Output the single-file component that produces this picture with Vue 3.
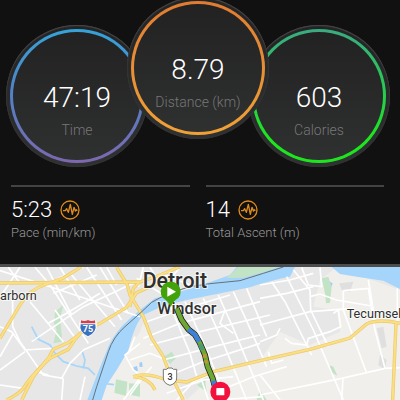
<script setup>
import { ref } from "vue";

const gauges = ref([
  { name: "time", value: "47:19", label: "Time" },
  { name: "distance", value: "8.79", label: "Distance (km)" },
  { name: "calories", value: "603", label: "Calories" },
]);

const stats = ref([
  { value: "5:23", label: "Pace (min/km)" },
  { value: "14", label: "Total Ascent (m)" },
]);

// minor streets
const streets = [
  "M0 112L60 22M0 32L180 90L420 170M25 22L60 70M105 22L150 75L265 250",
  "M38 110V200L60 245L130 345L190 355M90 125L190 245M0 200L35 215L75 270L155 265",
  "M0 330L75 275M0 375L70 385M140 22L215 165M180 22L240 120M215 45L345 200",
  "M260 22L365 180M300 22L385 160M95 245L250 140L420 60M145 190L200 160L300 100",
  "M160 100L290 45M120 80L250 22M185 355L210 310L250 270L330 235M190 355L185 420",
  "M240 420L255 350M110 335L145 345M0 290L40 220M320 22L350 75M165 150L230 240",
  "M420 250L375 285L400 330L420 345M370 420L420 355M405 230L385 280",
  "M450 22L520 130M480 40L570 75M410 55L500 110M430 22L415 80M540 22L500 70",
  "M440 185L540 150L690 105M430 235L540 190L780 125M450 255L600 215L810 165M490 300L640 260L780 225",
  "M510 135L570 280L590 350M555 125L620 270L680 420M610 115L670 250L740 420M655 105L700 205L790 420",
  "M700 95L750 205L800 320M740 85L800 230M510 345L610 305L780 250M500 400L610 360L700 350",
  "M390 300L450 280L500 300M390 405L430 350L455 320M530 420L580 365L680 325",
  "M640 400L760 350L860 320M650 420L790 410M675 150L660 190L700 220M600 345L625 420",
  "M780 75L870 60L940 40M780 115L860 100L940 80M780 195L930 155L1060 145",
  "M780 245L830 225L840 205M815 65L855 125L935 285M860 50L940 210L1030 420",
  "M880 30L930 90L932 150L985 260M905 22L925 75L965 80L960 22M930 110L960 102L1010 120L1115 138",
  "M1030 92L1105 85L1125 210M1030 92V150L1100 340M1105 60L1125 180M1125 210L1155 325",
  "M1000 160L1015 150L1022 200L990 215L925 235L920 255L875 250L855 235M1192 85V190",
  "M780 405L1025 355L1155 325L1200 323M1029 355L1025 420M780 345L840 420M805 275L815 310L850 300",
];

// highways, drawn twice: casing, then fill
const highways = [
  "M0 235L60 135Q85 90 140 72L190 54L245 20",
  "M0 69L420 66L480 45L540 20",
  "M20 420Q65 400 80 370Q110 330 150 295L205 268Q220 245 240 220L300 190L380 142Q395 120 410 98L450 80L510 55",
  "M65 420L100 350L148 290L160 268L205 248L240 222",
  "M350 22L382 75L390 105L430 170L455 235L490 290L505 330L550 420",
  "M390 140L400 85L420 65",
  "M400 350Q435 335 500 360L560 366L640 335L780 302L930 268L1050 234L1100 192Q1135 175 1200 190",
  "M400 350Q450 355 465 390",
  "M1188 190L1178 420",
];

const route = "M530 145L545 180L565 208L585 224L600 250L615 285L623 320L638 355L644 378";
</script>

<template>
  <main class="activity">
    <section class="summary">
      <div class="gauges">
        <div v-for="g in gauges" :key="g.name" class="gauge" :class="g.name">
          <div class="gauge-ring">
            <span class="gauge-value">{{ g.value }}</span>
            <span class="gauge-label">{{ g.label }}</span>
          </div>
        </div>
      </div>

      <div class="stats">
        <div v-for="s in stats" :key="s.label" class="stat">
          <div class="stat-top">
            <span class="stat-value">{{ s.value }}</span>
            <svg class="pulse" viewBox="0 0 60 60" aria-hidden="true">
              <circle cx="30" cy="30" r="27" />
              <path d="M9 32H16L20 26L25 37L31 13L37 43L42 22L46 33L49 29L52 32" />
            </svg>
          </div>
          <span class="stat-label">{{ s.label }}</span>
        </div>
      </div>
    </section>

    <svg class="map" viewBox="0 21 1200 399" role="img" aria-label="Route map">
      <rect y="21" width="1200" height="399" fill="#e7e7e7" />
      <g fill="#f0efeb">
        <path d="M420 215L385 270L350 330L320 375L305 420H560L500 300L450 220L430 190Z" />
        <path d="M560 420L640 345L780 300L840 215L930 255L1020 215L1010 150L940 140L960 60L1010 22L1200 90V420Z" />
      </g>
      <g fill="#dfdfdf">
        <path d="M1130 205L1150 200L1160 260L1145 265Z" />
        <path d="M1140 285L1160 300L1155 330L1135 315Z" />
        <path d="M1018 70L1060 65L1050 95L1025 90Z" />
      </g>

      <g fill="#c3e3c6">
        <path d="M165 155L190 135L180 175L187 245L160 250L170 210L162 190Z" />
        <path d="M348 358L382 365L378 408L343 398Z" />
        <path d="M387 370L420 372V410L388 404Z" />
        <path d="M492 290L515 275L528 295L510 312Z" />
        <path d="M965 55L985 50L995 80L990 128L978 130L975 100Z" />
        <path d="M988 316L1000 320L1012 347L990 335Z" />
        <path d="M780 390L800 420H770Z" />
        <path d="M590 375L615 360L620 395Z" />
      </g>

      <path class="water" d="M262 420L285 360L325 260Q345 215 385 180L420 150L465 115L540 95L620 70L690 45L710 21H885L870 50L840 56L780 72L750 82L680 96L560 120L490 137L430 165Q405 190 385 270L350 330L320 375L305 420Z" />
      <path class="water" d="M995 21L1020 42L1080 52L1150 62L1200 87V21Z" />
      <path class="island" d="M680 54Q700 35 715 21H840L780 40L730 53Z" />
      <g class="creek">
        <path d="M95 200L115 238L150 255L165 280L190 305L230 318L265 325L285 345" />
        <path d="M100 240L120 230M245 270L255 300L250 325" />
        <path d="M310 370L342 374" />
      </g>
      <g fill="#9fcdf5">
        <path d="M400 322L411 318L414 332L402 335Z" />
        <path d="M418 308L426 306L428 320L419 321Z" />
        <path d="M990 65L998 70L994 80Z" />
      </g>

      <g class="streets">
        <path v-for="(d, i) in streets" :key="i" :d="d" />
      </g>
      <g class="highway-casing">
        <path v-for="(d, i) in highways" :key="i" :d="d" />
      </g>
      <g class="highways">
        <path v-for="(d, i) in highways" :key="i" :d="d" />
      </g>
      <path
        class="border-line"
        d="M278 420L290 380L325 275Q340 230 375 200L420 160L455 127Q500 100 570 80L630 71L720 62L790 40L850 21"
      />

      <!-- interstate shield -->
      <g>
        <path d="M240 181Q252 186 264 179Q276 186 288 181Q299 214 264 231Q229 214 240 181Z" fill="#fff" />
        <path d="M242 193Q236 216 264 229Q292 216 286 193Z" fill="#3c72bd" />
        <path d="M243 181Q253 186 264 180Q275 186 285 181L286 190H242Z" fill="#cf4351" />
        <text class="shield-text" x="264" y="217">75</text>
      </g>
      <!-- provincial route -->
      <g>
        <path
          d="M490 328H500L504 324H516L520 328H530V354Q530 370 510 376Q490 370 490 354Z"
          fill="#fff"
          stroke="#777"
          stroke-width="3"
        />
        <text class="route-number" x="510" y="360">3</text>
      </g>

      <text class="place town" x="0" y="121">arborn</text>
      <text class="place town" x="1040" y="174">Tecumseh</text>
      <text class="place capital" x="428" y="85">Detroit</text>
      <text class="place city" x="472" y="163">Windsor</text>

      <g class="route">
        <path :d="route" stroke="#222" stroke-width="18" />
        <path :d="route" stroke="#6ea832" stroke-width="13" />
        <path d="M565 208L585 224L597 245" stroke="#3d80de" stroke-width="13" />
        <path d="M600 253L608 270" stroke="#4b9a72" stroke-width="13" />
        <path d="M613 282L620 310" stroke="#b99a2c" stroke-width="11" stroke-dasharray="12 7" />
        <path d="M640 362L644 380" stroke="#3d80de" stroke-width="13" />
      </g>

      <!-- start and finish pins -->
      <g>
        <path d="M512 141Q505 124 489 114A30 30 0 1 1 535 114Q519 124 512 141Z" fill="#43a20a" />
        <path d="M502 80L528 95L502 110Z" fill="#fff" />
      </g>
      <g>
        <path d="M661 444Q654 430 640 417A30 30 0 1 1 682 417Q668 430 661 444Z" fill="#f3103c" />
        <rect x="649" y="384" width="24" height="22" rx="2" fill="#fff" />
      </g>
    </svg>
  </main>
</template>

<style>
body {
  margin: 0;
  background: #111;
}
</style>

<style scoped>
.activity {
  overflow: hidden;
  font-family: Roboto, "Noto Sans", sans-serif;
  font-weight: 300;
  color: #fff;
  background: #111;
}

.gauges {
  display: flex;
  justify-content: center;
  padding: 25px 4px 0 0;
}

.gauge {
  box-sizing: border-box;
  flex: none;
  width: 142px;
  height: 142px;
  padding: 4px;
  border-radius: 50%;
  background: linear-gradient(#222426, #303132);
  box-shadow: inset 0 1px 1px #4a4644, inset 0 0 1px 1px #333;
}

.gauge.distance {
  position: relative;
  z-index: 1;
  margin: -28px -21px 28px;
}

.gauge-ring {
  box-sizing: border-box;
  display: flex;
  flex-direction: column;
  align-items: center;
  height: 100%;
  padding-top: 49px;
  border: 3px solid transparent;
  border-radius: 50%;
}

.time .gauge-ring {
  background: linear-gradient(#222, #2f3030) padding-box,
    linear-gradient(#36a3d8, #5480c4 50%, #7d68ae) border-box;
}

.distance .gauge-ring {
  background: linear-gradient(#222, #2f3030) padding-box,
    linear-gradient(#e07c32, #f0a236) border-box;
}

.calories .gauge-ring {
  background: linear-gradient(#222, #2f3030) padding-box,
    linear-gradient(#3aab80, #26cf4c 50%, #1ee61e 80%) border-box;
}

.gauge-value {
  font-size: 28px;
  line-height: 34px;
}

.gauge-label {
  margin-top: 5px;
  font-size: 14px;
  line-height: 20px;
  color: #777;
  white-space: nowrap;
}

.stats {
  display: grid;
  grid-template-columns: 1fr 1fr;
  gap: 16px;
  padding: 18px 16px 23px 11px;
}

.stat {
  border-top: 2px solid #454445;
  padding-top: 9px;
}

.stat-top {
  display: flex;
  align-items: center;
  gap: 8px;
}

.stat-value {
  font-size: 22px;
  line-height: 28px;
}

.pulse {
  width: 20px;
  height: 20px;
  fill: none;
  stroke: #e08c1c;
  stroke-width: 4;
  stroke-linejoin: round;
}

.stat-label {
  display: block;
  margin-top: 1px;
  font-size: 13px;
  line-height: 16px;
  color: #999;
}

.map {
  display: block;
  width: 100%;
  height: auto;
  border-top: 3px solid #4c4c4c;
}

.water {
  fill: #a5d5fb;
}

.island {
  fill: #c3e3c6;
}

.creek {
  fill: none;
  stroke: #a5d5fb;
  stroke-width: 5;
}

.streets {
  fill: none;
  stroke: #fff;
  stroke-width: 5;
}

.highway-casing {
  fill: none;
  stroke: #ecc968;
  stroke-width: 10;
}

.highways {
  fill: none;
  stroke: #fbdf85;
  stroke-width: 6;
}

.border-line {
  fill: none;
  stroke: #66727c;
  stroke-width: 3;
}

.place {
  fill: #303030;
  stroke: #fff;
  stroke-width: 6;
  stroke-opacity: 0.7;
  paint-order: stroke;
  font-weight: 400;
}

.town {
  font-size: 38px;
}

.capital {
  font-size: 64px;
  font-weight: 500;
}

.city {
  font-size: 48px;
  font-weight: 500;
}

.shield-text {
  fill: #fff;
  font-size: 27px;
  font-weight: 700;
  text-anchor: middle;
}

.route-number {
  fill: #333;
  font-size: 27px;
  font-weight: 500;
  text-anchor: middle;
}

.route {
  fill: none;
  stroke-linejoin: round;
}
</style>
